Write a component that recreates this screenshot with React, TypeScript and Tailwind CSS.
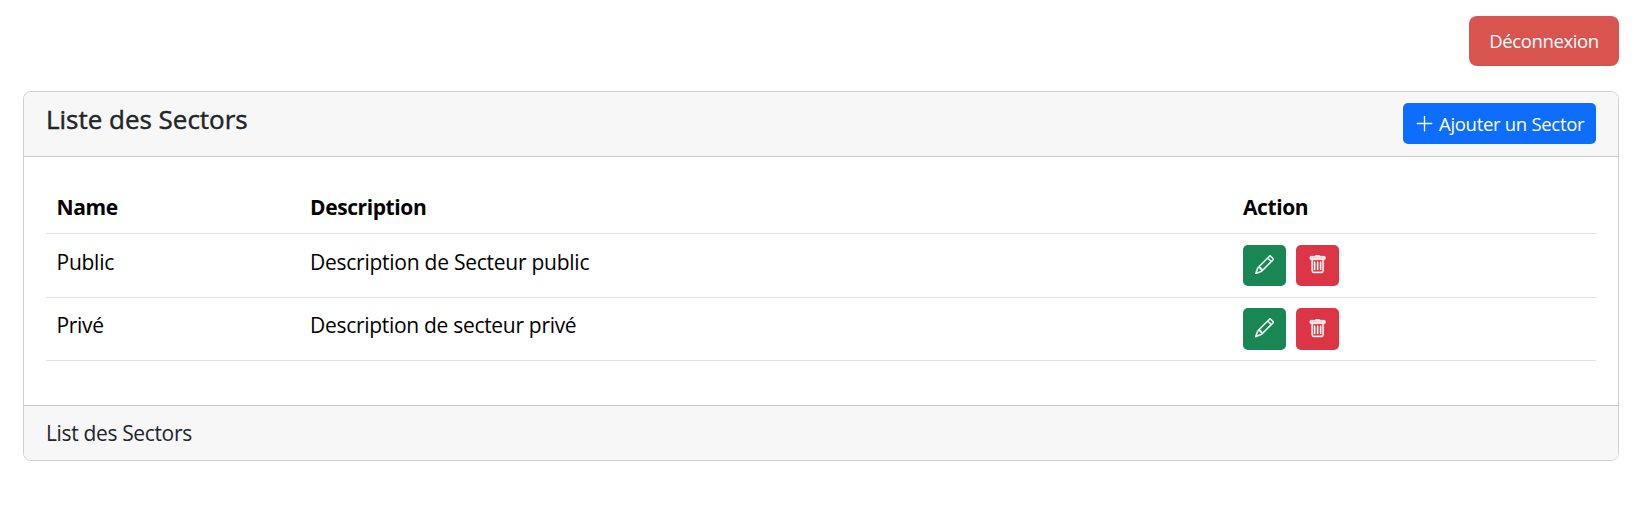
import { BsPencil, BsPlusLg, BsTrash } from "react-icons/bs";

const sectors = [
  { name: "Public", description: "Description de Secteur public", row: "h-16 pt-[11px]", button: "h-[41px]", label: "pt-px" },
  { name: "Privé", description: "Description de secteur privé", row: "h-[63px] pt-[10px]", button: "h-[42px]", label: "pt-px tracking-[-0.3px]" },
];

const columns = "grid grid-cols-[253.5px_933px_1fr]";

export default function App() {
  return (
    <div className="min-h-[517px] bg-white px-[23px] pt-4 font-['Open_Sans','Noto_Sans',sans-serif] text-[21px] leading-[33px] tracking-[-0.25px] text-black">
      <div className="mr-[3px] flex justify-end">
        <button className="h-[50px] w-[150px] rounded-lg bg-[#d9534f] text-[18.5px] leading-[50px] tracking-[-0.4px] text-white">
          Déconnexion
        </button>
      </div>

      <div className="mt-[25px] mr-[3px] h-[370px] overflow-hidden rounded-lg border border-[#cfcfcf]">
        <header className="flex h-[65px] items-start justify-between border-b border-[#c8c8c8] bg-[#f7f7f7] px-[22px] pt-[11px]">
          <h1 className="text-[26px] font-medium leading-[33px] tracking-[-0.02px] text-[#212529] [-webkit-text-stroke:0.45px_#212529]">Liste des Sectors</h1>
          <button className="flex h-[41px] w-[193px] items-center rounded-[5px] bg-[#0d6efd] pl-[11px] text-[18.5px] tracking-[-0.3px] text-white">
            <BsPlusLg className="-mt-px mr-1 size-[21px]" />
            <span className="whitespace-nowrap">Ajouter un Sector</span>
          </button>
        </header>

        <div className="h-[248px] px-[22px] pt-[22px]">
          <div className={`${columns} h-[55px] border-b border-[#dee2e6] pl-[10.5px] pt-3 font-bold tracking-[-0.4px]`}>
            <div>Name</div>
            <div>Description</div>
            <div>Action</div>
          </div>
          {sectors.map((sector) => (
            <div key={sector.name} className={`${columns} ${sector.row} border-b border-[#dee2e6] pl-[10.5px]`}>
              <div className={sector.label}>{sector.name}</div>
              <div className={sector.label}>{sector.description}</div>
              <div className="flex items-start gap-[10px]">
                <button className={`${sector.button} flex w-[43px] items-center justify-center rounded-[5px] bg-[#198754] pb-[2px] text-white`}>
                  <BsPencil className="size-[19.25px]" strokeWidth={0.3} />
                </button>
                <button className={`${sector.button} flex w-[43px] items-center justify-center rounded-[5px] bg-[#dc3545] pb-px text-white`}>
                  <span className="grid place-items-center">
                    <svg viewBox="0 0 16 16" className="col-start-1 row-start-1 size-[19.25px]">
                      <rect x="2" y="2" width="12" height="1.6" fill="white" fillOpacity="0.65" />
                    </svg>
                    <BsTrash className="col-start-1 row-start-1 size-[19.25px]" strokeWidth={0.3} />
                  </span>
                </button>
              </div>
            </div>
          ))}
        </div>

        <footer className="h-[55px] border-t border-[#c8c8c8] bg-[#f7f7f7] px-[22px] pt-[11px] tracking-[-0.35px] text-[#212529]">
          List des Sectors
        </footer>
      </div>
    </div>
  );
}
